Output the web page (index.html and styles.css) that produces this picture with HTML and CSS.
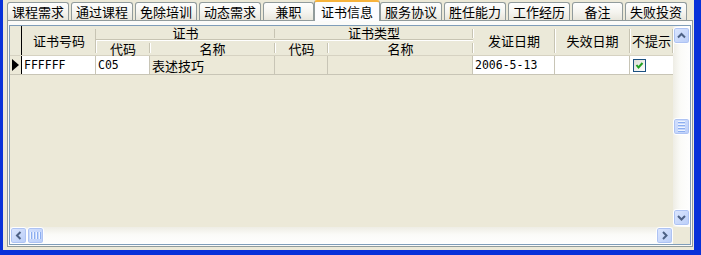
FILE: index.html
```html
<!DOCTYPE html>
<html lang="zh-CN">
<head>
    <meta charset="UTF-8">
    <title>证书信息</title>
    <link rel="stylesheet" href="styles.css">
</head>
<body>
    <div class="window">
        <div class="tabs">
            <div class="tab">课程需求</div>
            <div class="tab">通过课程</div>
            <div class="tab">免除培训</div>
            <div class="tab">动态需求</div>
            <div class="tab tab-short">兼职</div>
            <div class="tab tab-active">证书信息</div>
            <div class="tab">服务协议</div>
            <div class="tab">胜任能力</div>
            <div class="tab">工作经历</div>
            <div class="tab tab-short">备注</div>
            <div class="tab">失败投资</div>
        </div>

        <div class="panel">
            <div class="grid">
                <div class="grid-body">
                    <div class="grid-main">
                        <div class="head">
                            <div class="hc ind span-rows"></div>
                            <div class="hc span-rows">证书号码</div>
                            <div class="hc group span-cols">证书</div>
                            <div class="hc group span-cols">证书类型</div>
                            <div class="hc span-rows">发证日期</div>
                            <div class="hc span-rows">失效日期</div>
                            <div class="hc span-rows">不提示</div>
                            <div class="hc sub">代码</div>
                            <div class="hc sub">名称</div>
                            <div class="hc sub">代码</div>
                            <div class="hc sub">名称</div>
                        </div>
                        <div class="row">
                            <div class="cell ind">
                                <svg width="7" height="12" viewBox="0 0 7 12"><polygon points="0,0 7,6 0,12" fill="#000"/></svg>
                            </div>
                            <div class="cell mono">FFFFFF</div>
                            <div class="cell mono">C05</div>
                            <div class="cell ro">表述技巧</div>
                            <div class="cell ro"></div>
                            <div class="cell ro"></div>
                            <div class="cell mono">2006-5-13</div>
                            <div class="cell"></div>
                            <div class="cell check-cell">
                                <span class="checkbox">
                                    <svg width="11" height="11" viewBox="0 0 11 11"><polyline points="2.5,5 4.5,7.5 8.5,3" fill="none" stroke="#21a121" stroke-width="2"/></svg>
                                </span>
                            </div>
                        </div>
                    </div>

                    <div class="vscroll">
                        <div class="sb-btn">
                            <svg width="15" height="15" viewBox="0 0 15 15"><polyline points="4,9.5 7.5,6 11,9.5" fill="none" stroke="#4d6185" stroke-width="2"/></svg>
                        </div>
                        <div class="vtrack">
                            <div class="thumb thumb-v">
                                <span></span><span></span><span></span><span></span>
                            </div>
                        </div>
                        <div class="sb-btn">
                            <svg width="15" height="15" viewBox="0 0 15 15"><polyline points="4,6 7.5,9.5 11,6" fill="none" stroke="#4d6185" stroke-width="2"/></svg>
                        </div>
                    </div>
                </div>

                <div class="hbar">
                    <div class="hscroll">
                        <div class="sb-btn">
                            <svg width="15" height="15" viewBox="0 0 15 15"><polyline points="9.5,4 6,7.5 9.5,11" fill="none" stroke="#4d6185" stroke-width="2"/></svg>
                        </div>
                        <div class="thumb thumb-h">
                            <span></span><span></span><span></span><span></span>
                        </div>
                        <div class="htrack"></div>
                        <div class="sb-btn">
                            <svg width="15" height="15" viewBox="0 0 15 15"><polyline points="6,4 9.5,7.5 6,11" fill="none" stroke="#4d6185" stroke-width="2"/></svg>
                        </div>
                    </div>
                    <div class="corner"></div>
                </div>
            </div>
        </div>
    </div>
</body>
</html>
```

FILE: styles.css
```css
body { margin: 0; background: #ece9d8; font-family: "Noto Sans CJK SC", sans-serif; font-size: 13px; color: #000; overflow: hidden; }
.window { width: 701px; height: 255px; box-sizing: border-box; background: #ece9d8; border-left: 3px solid #0831d9; border-right: 7px solid #0831d9; border-bottom: 5px solid #0831d9; }

/* tab strip */
.tabs { display: flex; align-items: flex-end; gap: 2px; height: 20px; padding-left: 4px; }
.tab { width: 62px; height: 18px; box-sizing: border-box; border: 1px solid #919b9c; border-bottom: none; border-radius: 3px 3px 0 0; background: linear-gradient(#fefefe, #f5f4ef 55%, #e8e6dc); text-align: center; line-height: 17px; white-space: nowrap; }
.tab-short { width: 51px; }
.tab-active { width: 66px; height: 21px; margin: 0 -2px -1px; border-top: 2px solid #f7b33c; background: #fcfcfe; line-height: 19px; position: relative; z-index: 1; }

.panel { width: 686px; height: 227px; box-sizing: border-box; margin-left: 4px; border: 1px solid #919b9c; padding: 4px 1px 1px 1px; background: #fbfbf9; }

/* grid */
.grid { height: 220px; box-sizing: border-box; border: 1px solid #7f9db9; display: flex; flex-direction: column; }
.grid-body { display: flex; height: 201px; }
.grid-main { width: 663px; background: #ece9d8; }

.head { display: grid; grid-template-columns: 12px 74px 54px 125px 53px 145px 82px 75px 43px; grid-template-rows: 15px 14px; border-bottom: 1px solid #d6d2c2; background: #ebe9d9; }
.hc { position: relative; display: flex; align-items: center; justify-content: center; white-space: nowrap; line-height: 13px; }
.hc::after { content: ""; position: absolute; right: 0; top: 3px; bottom: 2px; width: 1px; background: #c7c4b3; box-shadow: 1px 0 #fff; }
.hc.ind { border-right: 1px solid #000; }
.hc.ind::after { display: none; }
.span-rows { grid-row: span 2; }
.span-cols { grid-column: span 2; }
.group { align-items: flex-start; background: linear-gradient(#ebe9d9 13px, #c7c4b3 13px, #c7c4b3 14px, #fff 14px); padding-bottom: 1px; }
.group::after { bottom: 3px; }
.sub { align-items: flex-end; }
.sub::after { top: 2px; }

.row { display: grid; grid-template-columns: 12px 74px 54px 125px 53px 145px 82px 75px 43px; height: 19px; box-sizing: border-box; border-bottom: 1px solid #c8c5b6; background: #fff; }
.cell { border-right: 1px solid #c8c5b6; padding-left: 2px; display: flex; align-items: center; white-space: nowrap; overflow: hidden; }
.cell:last-child { border-right: none; }
.cell.ind { background: #ece9d8; border-right: 1px solid #000; padding-left: 2px; }
.cell.ro { background: #ece9d8; }
.mono { font-family: "DejaVu Sans Mono", monospace; font-size: 11.5px; }
.check-cell { padding-left: 3px; }
.checkbox { width: 13px; height: 13px; box-sizing: border-box; border: 1px solid #1c5180; background: linear-gradient(135deg, #dcdcd7, #fff); display: flex; }

/* scrollbars */
.vscroll { width: 17px; box-sizing: border-box; padding: 1px 0; display: flex; flex-direction: column; background: linear-gradient(90deg, #eeede5, #fbfbf8 45%, #fefefe); }
.vtrack { flex: 1; }
.hbar { display: flex; height: 17px; }
.hscroll { width: 663px; display: flex; background: linear-gradient(#eeede5, #fbfbf8 45%, #fefefe); }
.htrack { flex: 1; }
.corner { width: 17px; background: #ece9d8; }

.sb-btn { width: 17px; height: 17px; box-sizing: border-box; border: 1px solid #fff; border-radius: 3px; background: linear-gradient(135deg, #dde7fe, #b9cdf8); box-shadow: inset 0 0 0 1px #aec3f3; display: flex; align-items: center; justify-content: center; flex: none; }
.thumb { box-sizing: border-box; border: 1px solid #fff; border-radius: 3px; background: linear-gradient(135deg, #d3e0fd, #bccff9); box-shadow: inset 0 0 0 1px #aec3f3; display: flex; align-items: center; justify-content: center; gap: 1px; flex: none; }
.thumb-v { width: 17px; height: 17px; margin-top: 74px; flex-direction: column; }
.thumb-v span { width: 7px; height: 1px; background: #eef4fe; box-shadow: 0 1px #8caef0; margin-bottom: 1px; }
.thumb-h { width: 17px; height: 17px; }
.thumb-h span { width: 1px; height: 7px; background: #eef4fe; box-shadow: 1px 0 #8caef0; margin-right: 1px; }
```
